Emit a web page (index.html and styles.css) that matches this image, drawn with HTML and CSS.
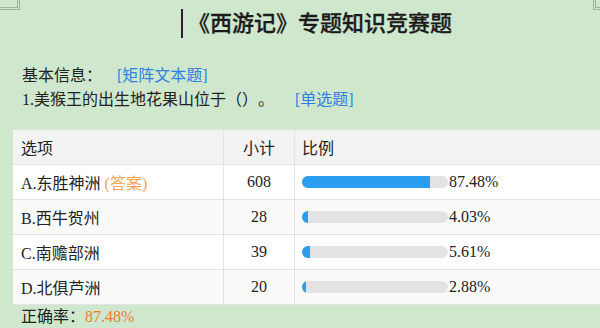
FILE: index.html
```html
<!DOCTYPE html>
<html lang="zh">
<head>
<meta charset="utf-8">
<title>《西游记》专题知识竞赛题</title>
<link rel="stylesheet" href="styles.css">
</head>
<body>
<div class="mark mark-tl"></div>
<div class="mark mark-tr"></div>
<div class="page">
  <h1 class="title"><span class="caret"></span>《西游记》专题知识竞赛题</h1>
  <div class="info">
    <p class="line">基本信息：<span class="tag">[矩阵文本题]</span></p>
    <p class="line">1.美猴王的出生地花果山位于（）。<span class="tag tag-q">[单选题]</span></p>
  </div>
  <table class="stats">
    <thead>
      <tr><th class="c-opt">选项</th><th class="c-num">小计</th><th class="c-pct">比例</th></tr>
    </thead>
    <tbody>
      <tr class="odd"><td class="c-opt">A.东胜神洲 <span class="answer">(答案)</span></td><td class="c-num">608</td><td class="c-pct"><div class="pct"><div class="track"><div class="fill" style="width:87.48%"></div></div><span class="pct-text">87.48%</span></div></td></tr>
      <tr class="even"><td class="c-opt">B.西牛贺州</td><td class="c-num">28</td><td class="c-pct"><div class="pct"><div class="track"><div class="fill" style="width:4.03%"></div></div><span class="pct-text">4.03%</span></div></td></tr>
      <tr class="odd"><td class="c-opt">C.南赡部洲</td><td class="c-num">39</td><td class="c-pct"><div class="pct"><div class="track"><div class="fill" style="width:5.61%"></div></div><span class="pct-text">5.61%</span></div></td></tr>
      <tr class="even"><td class="c-opt">D.北俱芦洲</td><td class="c-num">20</td><td class="c-pct"><div class="pct"><div class="track"><div class="fill" style="width:2.88%"></div></div><span class="pct-text">2.88%</span></div></td></tr>
    </tbody>
  </table>
  <p class="rate">正确率：<span class="rate-val">87.48%</span></p>
</div>
</body>
</html>
```
FILE: styles.css
```css
html, body {
  margin: 0;
  padding: 0;
  overflow: hidden;
}
body {
  background: #cfe8cd;
  font-family: "Liberation Serif", "Noto Sans CJK SC", serif;
  color: #222;
  width: 600px;
  height: 328px;
  position: relative;
  text-spacing-trim: space-all;
}
.mark {
  position: absolute;
  top: 0;
  border-color: #9fb09f;
  border-style: double;
  border-width: 0;
}
.mark-tl {
  left: 0;
  width: 17px;
  height: 7px;
  border-right-width: 3px;
  border-bottom-width: 3px;
}
.mark-tr {
  left: 593px;
  width: 4px;
  height: 7px;
  border-left-width: 3px;
  border-bottom-width: 3px;
}
.page {
  width: 600px;
}
.title {
  margin: 0;
  padding: 9px 0 0 181px;
  height: 29px;
  display: flex;
  align-items: center;
  font-size: 22px;
  font-weight: 500;
  line-height: 29px;
  color: #1b1b1b;
  font-family: "Liberation Serif", "Noto Sans CJK SC", serif;
  -webkit-text-stroke: 0.3px #1b1b1b;
}
.caret {
  display: block;
  width: 2px;
  height: 29px;
  background: #2e1c2e;
  margin-right: 5px;
}
.info {
  padding: 26px 0 0 22px;
}
.line {
  margin: 0;
  font-size: 16px;
  line-height: 23.5px;
}
.tag {
  color: #2f80e0;
  margin-left: 15px;
}
.tag-q {
  margin-left: 21px;
}
.stats {
  margin: 18px 0 0 13px;
  border-collapse: collapse;
  width: 587px;
  font-size: 16px;
}
.stats th, .stats td {
  height: 34px;
  padding: 0 8px;
  border: 1px solid #e3e3e3;
  text-align: left;
  font-weight: normal;
  vertical-align: middle;
}
.stats thead tr {
  background: #f3f3f3;
}
.stats tr.odd {
  background: #ffffff;
}
.stats tr.even {
  background: #fafafa;
}
.stats .c-opt {
  width: 196px;
  border-left: none;
  padding-left: 8px;
  padding-right: 6px;
}
.stats .c-num {
  width: 54px;
  text-align: center;
}
.stats .c-pct {
  padding-left: 7px;
  border-right: none;
}
.answer {
  color: #f3a553;
}
.pct {
  display: flex;
  align-items: center;
}
.track {
  width: 146px;
  height: 12px;
  border-radius: 6px;
  background: #e3e3e5;
  overflow: hidden;
  margin-right: 1px;
}
.fill {
  height: 100%;
  background: #2b9ef2;
}
.pct-text {
  line-height: 20px;
}
.rate {
  margin: 0;
  padding-left: 21px;
  font-size: 16px;
  line-height: 24px;
}
.rate-val {
  color: #f07a2a;
}
```
